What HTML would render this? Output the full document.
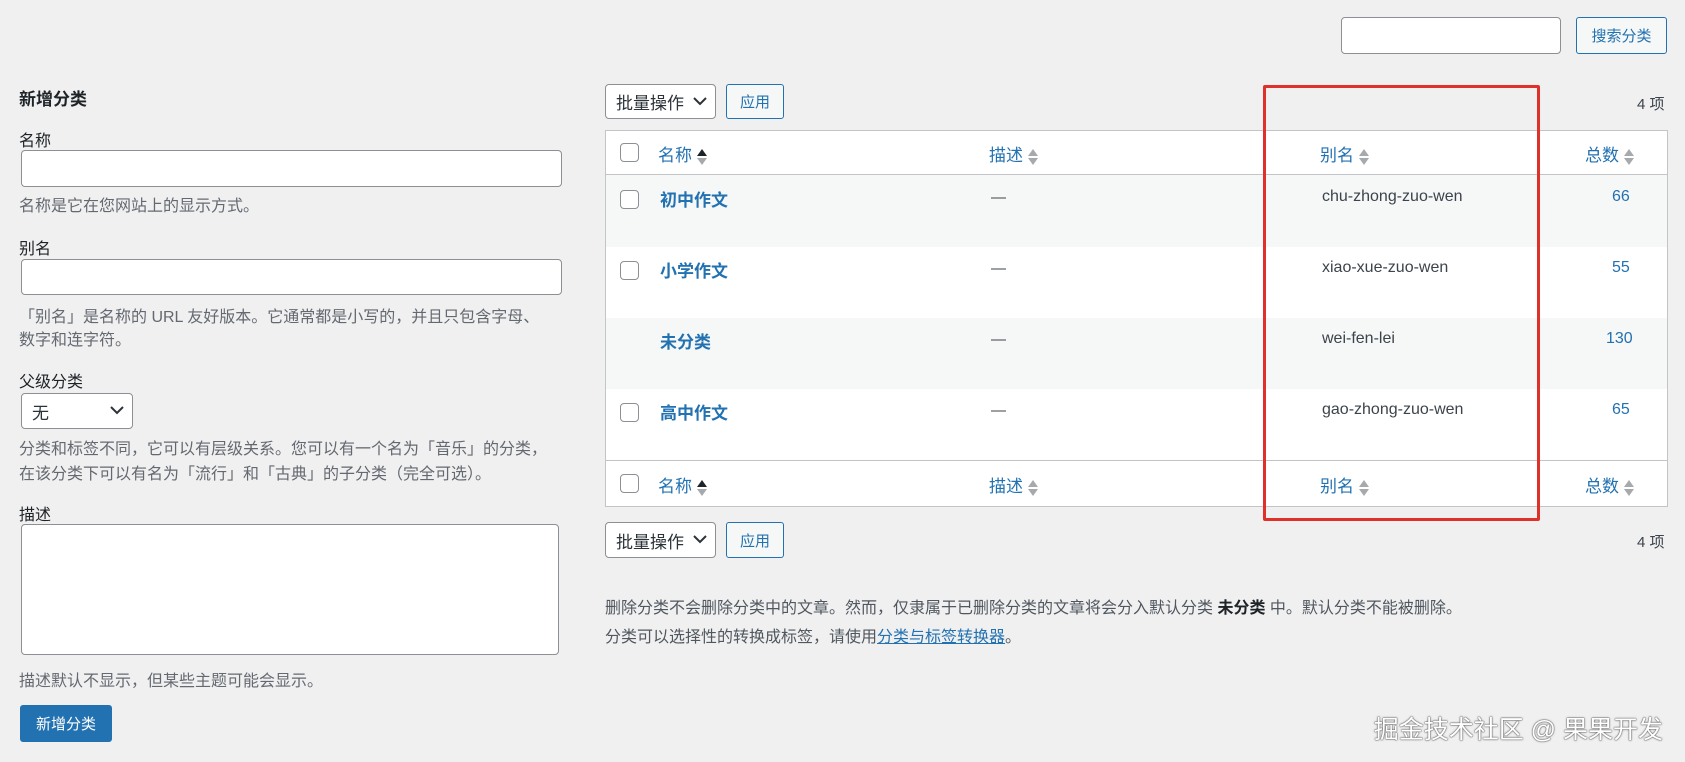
<!DOCTYPE html>
<html><head><meta charset="utf-8"><style>
*{box-sizing:border-box;margin:0;padding:0}
body{width:1685px;height:762px;background:#f0f0f1;font-family:"Liberation Sans","Noto Sans CJK SC",sans-serif;color:#3c434a;font-size:14px;position:relative;overflow:hidden}
.a{position:absolute;white-space:nowrap}
.inp{position:absolute;background:#fff;border:1px solid #8c8f94;border-radius:4px}
.btn{position:absolute;border:1px solid #2271b1;color:#2271b1;background:#f6f7f7;border-radius:3px;display:flex;align-items:center;justify-content:center;font-size:15px}
.sel{position:absolute;background:#fff;border:1px solid #8c8f94;border-radius:4px;font-size:17px;color:#2c3338;padding-left:10px;display:flex;align-items:center}
.sel svg{position:absolute;right:8px;top:50%;margin-top:-5px}
.cb{position:absolute;width:19px;height:19px;border:1px solid #8c8f94;border-radius:4px;background:#fff}
.hd{position:absolute;color:#2271b1;font-size:17px}
.ar{display:inline-block;vertical-align:middle;margin-left:5px;width:10px;height:18px;position:relative}
.ar:before{content:"";position:absolute;left:0;top:1px;border:5px solid transparent;border-top:0;border-bottom:7px solid #a7aaad}
.ar:after{content:"";position:absolute;left:0;top:10px;border:5px solid transparent;border-bottom:0;border-top:7px solid #a7aaad}
.ar.up:before{border-bottom-color:#1d2327}
.nm{position:absolute;color:#2271b1;font-weight:bold;font-size:17px}
.sl{position:absolute;font-size:16px;color:#3c434a}
.ct{position:absolute;color:#2271b1;font-size:16px}
.help{position:absolute;font-size:16px;color:#646970;white-space:nowrap}
.lbl{position:absolute;font-size:16px;color:#1d2327}
</style></head><body>
<div class="inp" style="left:1341px;top:17px;width:220px;height:37px"></div>
<div class="btn" style="left:1576px;top:17px;width:91px;height:37px">搜索分类</div>

<div class="a" style="left:19px;top:85px;font-size:17px;font-weight:bold;color:#1d2327">新增分类</div>
<div class="lbl" style="left:19px;top:127px">名称</div>
<div class="inp" style="left:21px;top:150px;width:541px;height:37px"></div>
<div class="help" style="left:19px;top:192px">名称是它在您网站上的显示方式。</div>
<div class="lbl" style="left:19px;top:235px">别名</div>
<div class="inp" style="left:21px;top:259px;width:541px;height:36px"></div>
<div class="help" style="left:19px;top:303px">「别名」是名称的 URL 友好版本。它通常都是小写的，并且只包含字母、</div>
<div class="help" style="left:19px;top:326px">数字和连字符。</div>
<div class="lbl" style="left:19px;top:368px">父级分类</div>
<div class="sel" style="left:21px;top:393px;width:112px;height:36px">无<svg width="14" height="9" viewBox="0 0 14 9"><path d="M1 1l6 6 6-6" fill="none" stroke="#2c3338" stroke-width="2"/></svg></div>
<div class="help" style="left:19px;top:435px">分类和标签不同，它可以有层级关系。您可以有一个名为「音乐」的分类，</div>
<div class="help" style="left:19px;top:460px">在该分类下可以有名为「流行」和「古典」的子分类（完全可选）。</div>
<div class="lbl" style="left:19px;top:501px">描述</div>
<div class="inp" style="left:21px;top:524px;width:538px;height:131px"></div>
<div class="help" style="left:19px;top:667px">描述默认不显示，但某些主题可能会显示。</div>
<div class="btn" style="left:20px;top:705px;width:92px;height:37px;background:#2271b1;color:#fff">新增分类</div>

<div class="sel" style="left:605px;top:84px;width:111px;height:35px">批量操作<svg width="14" height="9" viewBox="0 0 14 9"><path d="M1 1l6 6 6-6" fill="none" stroke="#2c3338" stroke-width="2"/></svg></div>
<div class="btn" style="left:726px;top:84px;width:58px;height:35px">应用</div>
<div class="a" style="left:1637px;top:93px;font-size:15px">4 项</div>

<div class="a" style="left:605px;top:130px;width:1063px;height:377px;background:#fff;border:1px solid #c3c4c7"></div>
<div class="a" style="left:606px;top:174px;width:1061px;height:1px;background:#c3c4c7"></div>
<div class="a" style="left:606px;top:175px;width:1061px;height:72px;background:#f6f7f7"></div>
<div class="a" style="left:606px;top:318px;width:1061px;height:71px;background:#f6f7f7"></div>
<div class="a" style="left:606px;top:460px;width:1061px;height:1px;background:#c3c4c7"></div>

<div class="cb" style="left:620px;top:143px"></div>
<div class="hd" style="left:658px;top:141px">名称<span class="ar up"></span></div>
<div class="hd" style="left:989px;top:141px">描述<span class="ar"></span></div>
<div class="hd" style="left:1320px;top:141px">别名<span class="ar"></span></div>
<div class="hd" style="left:1585px;top:141px">总数<span class="ar"></span></div>

<div class="cb" style="left:620px;top:190px"></div>
<div class="nm" style="left:660px;top:186px">初中作文</div>
<div class="a" style="left:991px;top:189px;font-size:15px">—</div>
<div class="sl" style="left:1322px;top:188px">chu-zhong-zuo-wen</div>
<div class="ct" style="left:1612px;top:188px">66</div>

<div class="cb" style="left:620px;top:261px"></div>
<div class="nm" style="left:660px;top:257px">小学作文</div>
<div class="a" style="left:991px;top:260px;font-size:15px">—</div>
<div class="sl" style="left:1322px;top:259px">xiao-xue-zuo-wen</div>
<div class="ct" style="left:1612px;top:259px">55</div>

<div class="nm" style="left:660px;top:328px">未分类</div>
<div class="a" style="left:991px;top:331px;font-size:15px">—</div>
<div class="sl" style="left:1322px;top:330px">wei-fen-lei</div>
<div class="ct" style="left:1606px;top:330px">130</div>

<div class="cb" style="left:620px;top:403px"></div>
<div class="nm" style="left:660px;top:399px">高中作文</div>
<div class="a" style="left:991px;top:402px;font-size:15px">—</div>
<div class="sl" style="left:1322px;top:401px">gao-zhong-zuo-wen</div>
<div class="ct" style="left:1612px;top:401px">65</div>

<div class="cb" style="left:620px;top:474px"></div>
<div class="hd" style="left:658px;top:472px">名称<span class="ar up"></span></div>
<div class="hd" style="left:989px;top:472px">描述<span class="ar"></span></div>
<div class="hd" style="left:1320px;top:472px">别名<span class="ar"></span></div>
<div class="hd" style="left:1585px;top:472px">总数<span class="ar"></span></div>

<div class="a" style="left:1263px;top:85px;width:277px;height:436px;border:3px solid #e0302a;border-radius:2px"></div>

<div class="sel" style="left:605px;top:522px;width:111px;height:36px">批量操作<svg width="14" height="9" viewBox="0 0 14 9"><path d="M1 1l6 6 6-6" fill="none" stroke="#2c3338" stroke-width="2"/></svg></div>
<div class="btn" style="left:726px;top:522px;width:58px;height:36px">应用</div>
<div class="a" style="left:1637px;top:531px;font-size:15px">4 项</div>

<div class="help" style="left:605px;top:594px;color:#50575e">删除分类不会删除分类中的文章。然而，仅隶属于已删除分类的文章将会分入默认分类 <b style="color:#1d2327">未分类</b> 中。默认分类不能被删除。</div>
<div class="help" style="left:605px;top:623px;color:#50575e">分类可以选择性的转换成标签，请使用<span style="color:#2271b1;text-decoration:underline">分类与标签转换器</span>。</div>

<div class="a" style="right:22px;top:710px;font-size:25px;color:#fff;text-shadow:0 0 1px #555,0 0 1px #555,0 0 2px #777">掘金技术社区 @ 果果开发</div>
</body></html>
